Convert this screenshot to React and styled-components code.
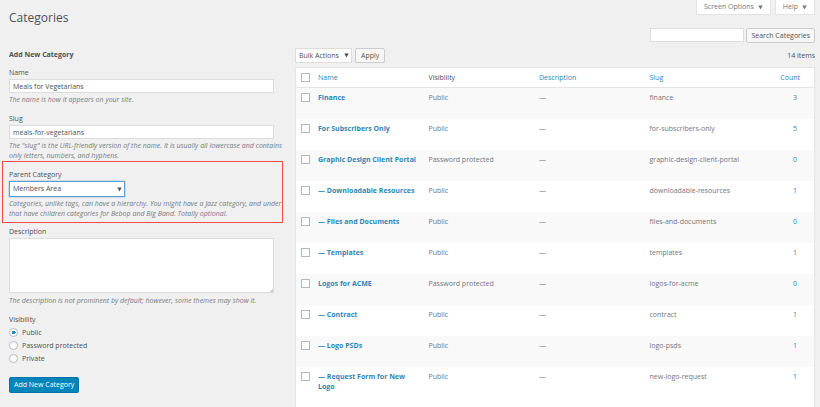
import React, { useState } from "react";
import styled, { createGlobalStyle } from "styled-components";

const categories = [
  { name: "Finance", visibility: "Public", slug: "finance", count: 3 },
  { name: "For Subscribers Only", visibility: "Public", slug: "for-subscribers-only", count: 5 },
  { name: "Graphic Design Client Portal", visibility: "Password protected", slug: "graphic-design-client-portal", count: 0 },
  { name: "— Downloadable Resources", visibility: "Public", slug: "downloadable-resources", count: 1 },
  { name: "— Files and Documents", visibility: "Public", slug: "files-and-documents", count: 0 },
  { name: "— Templates", visibility: "Public", slug: "templates", count: 1 },
  { name: "Logos for ACME", visibility: "Password protected", slug: "logos-for-acme", count: 0 },
  { name: "— Contract", visibility: "Public", slug: "contract", count: 1 },
  { name: "— Logo PSDs", visibility: "Public", slug: "logo-psds", count: 1 },
  { name: "— Request Form for New Logo", visibility: "Public", slug: "new-logo-request", count: 1 }
];

const visibilities = ["Public", "Password protected", "Private"];

function Arrow() {
  return (
    <svg width="5" height="5" viewBox="0 0 5 5" aria-hidden="true">
      <path d="M0.3 0.5h4.4L2.5 4.6z" fill="currentColor" />
    </svg>
  );
}

function AddCategory() {
  const [name, setName] = useState("Meals for Vegetarians");
  const [slug, setSlug] = useState("meals-for-vegetarians");
  const [visibility, setVisibility] = useState("Public");

  return (
    <Form onSubmit={e => e.preventDefault()}>
      <h2>Add New Category</h2>
      <Field>
        <Label htmlFor="name">Name</Label>
        <TextInput id="name" value={name} onChange={e => setName(e.target.value)} />
        <Hint>The name is how it appears on your site.</Hint>
      </Field>
      <Field>
        <Label htmlFor="slug">Slug</Label>
        <TextInput id="slug" value={slug} onChange={e => setSlug(e.target.value)} />
        <Hint>
          The "slug" is the URL-friendly version of the name. It is usually all
          lowercase and contains only letters, numbers, and hyphens.
        </Hint>
      </Field>
      <Field $highlighted>
        <Label htmlFor="parent">Parent Category</Label>
        <SelectBox $wide $focused>
          <select id="parent" defaultValue="Members Area">
            <option>None</option>
            <option>Members Area</option>
          </select>
          <Arrow />
        </SelectBox>
        <Hint>
          Categories, unlike tags, can have a hierarchy. You might have a Jazz
          category, and under that have children categories for Bebop and Big
          Band. Totally optional.
        </Hint>
      </Field>
      <Field>
        <Label htmlFor="description">Description</Label>
        <TextArea id="description" />
        <Hint>
          The description is not prominent by default; however, some themes may
          show it.
        </Hint>
      </Field>
      <Options>
        <legend>Visibility</legend>
        {visibilities.map(v => (
          <label key={v}>
            <Radio
              name="visibility"
              checked={visibility === v}
              onChange={() => setVisibility(v)}
            />
            {v}
          </label>
        ))}
      </Options>
      <Button $primary>Add New Category</Button>
    </Form>
  );
}

function CategoryTable() {
  return (
    <Table>
      <thead>
        <tr>
          <th className="check">
            <Checkbox aria-label="Select all" />
          </th>
          <th><a href="#name">Name</a></th>
          <th>Visibility</th>
          <th><a href="#description">Description</a></th>
          <th><a href="#slug">Slug</a></th>
          <th className="count"><a href="#count">Count</a></th>
        </tr>
      </thead>
      <tbody>
        {categories.map(c => (
          <tr key={c.slug}>
            <td className="check">
              <Checkbox aria-label={c.name} />
            </td>
            <td className="name">
              <a href={"#" + c.slug}>{c.name}</a>
            </td>
            <td>{c.visibility}</td>
            <td>—</td>
            <td>{c.slug}</td>
            <td className="count">
              <a href={"#count-" + c.slug}>{c.count}</a>
            </td>
          </tr>
        ))}
      </tbody>
    </Table>
  );
}

export default function App() {
  return (
    <>
      <GlobalStyle />
      <Page>
        <Header>
          <h1>Categories</h1>
          <ScreenTabs>
            <Tab>Screen Options <Arrow /></Tab>
            <Tab>Help <Arrow /></Tab>
          </ScreenTabs>
        </Header>
        <Search role="search" onSubmit={e => e.preventDefault()}>
          <TextInput aria-label="Search Categories" />
          <Button>Search Categories</Button>
        </Search>
        <Columns>
          <AddCategory />
          <main>
            <Toolbar>
              <SelectBox>
                <select aria-label="Bulk Actions">
                  <option>Bulk Actions</option>
                </select>
                <Arrow />
              </SelectBox>
              <Button>Apply</Button>
              <span>14 items</span>
            </Toolbar>
            <CategoryTable />
          </main>
        </Columns>
      </Page>
    </>
  );
}

const GlobalStyle = createGlobalStyle`
  * {
    box-sizing: border-box;
  }

  html {
    scrollbar-width: none;
  }

  body {
    margin: 0;
    background: #f0f0f0;
    color: #4c5157;
    font: 7px/10px "Open Sans", "Noto Sans", sans-serif;
  }

  h1, h2, p {
    margin: 0;
  }

  a {
    color: #2e86b8;
    text-decoration: none;
  }

  button, input, select, textarea {
    margin: 0;
    color: inherit;
    font: inherit;
  }
`;

const Page = styled.div`
  padding: 0 5px 0 9px;
`;

const Header = styled.header`
  display: flex;
  justify-content: space-between;
  height: 28px;

  h1 {
    padding-top: 10px;
    color: #4c5157;
    font-size: 12px;
    font-weight: 400;
    line-height: 16px;
  }
`;

const ScreenTabs = styled.div`
  display: flex;
  align-items: flex-start;
  gap: 4px;
`;

const Tab = styled.button`
  display: flex;
  align-items: center;
  gap: 4px;
  height: 15px;
  padding: 0 7px;
  border: 1px solid #e3e3e3;
  border-top: 0;
  background: #fff;
  color: #72777c;
`;

const Search = styled.form`
  display: flex;
  justify-content: flex-end;
  gap: 2px;

  input {
    width: 94px;
  }
`;

const Columns = styled.div`
  display: grid;
  grid-template-columns: 11fr 20fr;
  padding-top: 5px;
`;

const Form = styled.form`
  padding-right: 21px;

  h2 {
    padding: 1px 0 7px;
    font-size: 7px;
    font-weight: 700;
    line-height: 11px;
  }
`;

const Field = styled.div`
  margin: ${p => (p.$highlighted ? "-8px -9px 3px -7px" : "0 0 8px")};
  padding: ${p => (p.$highlighted ? "7px 9px 3px 6px" : "0")};
  border: ${p => (p.$highlighted ? "1px solid #fa474d" : "0")};
`;

const Label = styled.label`
  display: block;
  line-height: 12px;
`;

const TextInput = styled.input.attrs({ type: "text" })`
  display: block;
  width: 100%;
  height: 14px;
  padding: 0 3px;
  border: 1px solid #ddd;
  background: #fff;
`;

const TextArea = styled.textarea`
  display: block;
  width: 100%;
  height: 55px;
  margin-bottom: 1px;
  padding: 3px;
  border: 1px solid #ddd;
  background: #fff;

  &::-webkit-resizer {
    background: linear-gradient(135deg, #fff 88%, #ccc 88%);
  }
`;

const Hint = styled.p`
  margin-right: -10px;
  padding-top: 2px;
  color: #777b80;
  font-style: italic;
`;

const SelectBox = styled.div`
  display: flex;
  align-items: center;
  position: relative;
  width: ${p => (p.$wide ? "116px" : "57px")};

  select {
    width: 100%;
    height: ${p => (p.$focused ? "16px" : "15px")};
    padding: 0 3px;
    appearance: none;
    border: 1px solid ${p => (p.$focused ? "#5b9dd9" : "#ddd")};
    border-radius: 0;
    background: #fff;
    box-shadow: ${p => (p.$focused ? "0 0 1px #1e8cbe" : "none")};
    outline: 0;
  }

  svg {
    position: absolute;
    right: 3px;
    pointer-events: none;
  }
`;

const Options = styled.fieldset`
  margin: 0 0 12px;
  padding: 0;
  border: 0;

  legend {
    padding: 0;
    line-height: 12px;
  }

  label {
    display: flex;
    align-items: center;
    gap: 4px;
    height: 13px;
  }
`;

const Radio = styled.input.attrs({ type: "radio" })`
  width: 9px;
  height: 9px;
  appearance: none;
  border: 1px solid #b4b9be;
  border-radius: 50%;
  background: #fff;

  &:checked {
    background: radial-gradient(circle, #1e8cbe 2px, #fff 2px);
  }
`;

const Checkbox = styled.input.attrs({ type: "checkbox" })`
  display: block;
  width: 9px;
  height: 9px;
  appearance: none;
  border: 1px solid #b4b9be;
  background: #fff;
`;

const Button = styled.button`
  height: ${p => (p.$primary ? "16px" : "15px")};
  padding: 0 4px;
  border: 1px solid ${p => (p.$primary ? "#0073aa" : "#ccc")};
  border-radius: 2px;
  background: ${p => (p.$primary ? "#0085ba" : "#f7f7f7")};
  color: ${p => (p.$primary ? "#fff" : "#555")};
  white-space: nowrap;
`;

const Toolbar = styled.div`
  display: flex;
  align-items: center;
  gap: 3px;
  padding-bottom: 4px;

  button {
    padding: 0 5px;
  }

  span {
    margin-left: auto;
  }
`;

const Table = styled.table`
  width: 100%;
  table-layout: fixed;
  border: 1px solid #e5e5e5;
  border-collapse: separate;
  border-spacing: 0;
  background: #fff;

  th, td {
    padding: 0;
    text-align: left;
    vertical-align: top;
  }

  th {
    padding: 5px 0 4px;
    border-bottom: 1px solid #e5e5e5;
    font-weight: 400;
  }

  td {
    padding-top: 5px;
    color: #72777c;
  }

  tbody tr:nth-child(odd) {
    background: #f9f9f9;
  }

  .check {
    width: 22px;
    padding-left: 5px;
  }

  .name {
    padding-right: 12px;
    padding-bottom: 16px;
    font-weight: 700;
  }

  .count {
    width: 54px;
    padding-right: 14px;
    text-align: right;
  }

  td.count {
    padding-right: 17px;
  }
`;
